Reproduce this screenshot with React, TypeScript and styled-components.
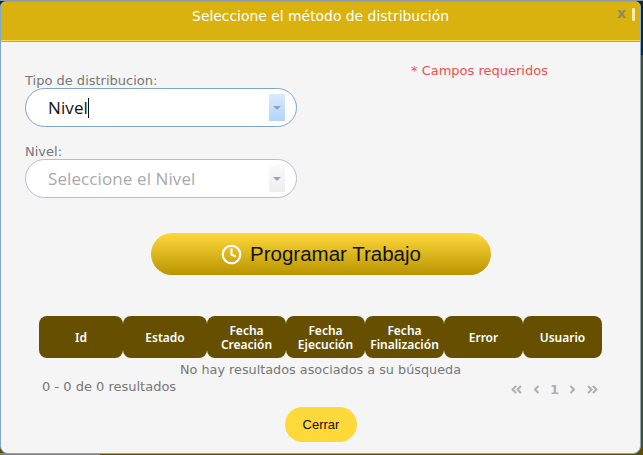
import { createGlobalStyle, styled } from 'styled-components'
import { Clock } from 'lucide-react'
import { FaAngleDoubleLeft, FaAngleDoubleRight, FaAngleLeft, FaAngleRight } from 'react-icons/fa'

const columns = [
  { key: 'id', label: 'Id', width: 84 },
  { key: 'estado', label: 'Estado', width: 84 },
  { key: 'creacion', label: 'Fecha\nCreación', width: 79 },
  { key: 'ejecucion', label: 'Fecha\nEjecución', width: 79 },
  { key: 'finalizacion', label: 'Fecha\nFinalización', width: 79 },
  { key: 'error', label: 'Error', width: 79 },
  { key: 'usuario', label: 'Usuario', width: 79 },
]

export default function App() {
  return (
    <>
      <GlobalStyle />
      <Dialog>
        <Header>
          <Title>Seleccione el método de distribución</Title>
          <CloseMark>x</CloseMark>
          <GripMark />
        </Header>
        <Body>
          <FormRow>
            <Fields>
              <Field>
                <Label>Tipo de distribucion:</Label>
                <SelectBox $active>
                  <SelectValue>
                    Nivel
                    <Caret />
                  </SelectValue>
                  <DropButton $active>
                    <Arrow />
                  </DropButton>
                </SelectBox>
              </Field>
              <Field>
                <Label>Nivel:</Label>
                <SelectBox>
                  <SelectValue $placeholder>Seleccione el Nivel</SelectValue>
                  <DropButton>
                    <Arrow />
                  </DropButton>
                </SelectBox>
              </Field>
            </Fields>
            <Required>* Campos requeridos</Required>
          </FormRow>

          <ScheduleButton type="button">
            <Clock size={21} color="#fff" strokeWidth={2.4} />
            Programar Trabajo
          </ScheduleButton>

          <TableHead>
            {columns.map((col) => (
              <HeadCell key={col.key} $width={col.width}>
                {col.label}
              </HeadCell>
            ))}
          </TableHead>
          <EmptyText>No hay resultados asociados a su búsqueda</EmptyText>
          <FooterRow>
            <Results>0 - 0 de 0 resultados</Results>
            <Pager>
              <FaAngleDoubleLeft size={13} />
              <FaAngleLeft size={13} />
              <PageNumber>1</PageNumber>
              <FaAngleRight size={13} />
              <FaAngleDoubleRight size={13} />
            </Pager>
          </FooterRow>
          <CloseButton type="button">Cerrar</CloseButton>
        </Body>
      </Dialog>
    </>
  )
}

const GlobalStyle = createGlobalStyle`
  html, body {
    margin: 0;
    padding: 0;
    height: 100%;
    overflow: hidden;
  }
  body {
    background:
      linear-gradient(#8a9aa8, #8a9aa8) top / 100% 1px no-repeat,
      linear-gradient(90deg, #808080 100px, transparent 100px) bottom / 100% 2px no-repeat,
      linear-gradient(#222 55px, #5e4d00 55px);
  }
`

const Dialog = styled.div`
  width: 641px;
  height: 453px;
  margin-top: 1px;
  box-sizing: border-box;
  border: 1px solid #7fa8cc;
  border-radius: 6px 6px 8px 8px;
  background: #f5f5f5;
  font-family: "DejaVu Sans", Verdana, sans-serif;
  overflow: hidden;
`

const Header = styled.div`
  position: relative;
  height: 39px;
  box-sizing: border-box;
  background: #d9b20f;
  border-bottom: 1px solid #f6dc4a;
  box-shadow: 0 1px 0 #8faabf;
  display: flex;
  justify-content: center;
  padding-top: 6px;
`

const Title = styled.div`
  color: #fff;
  font-size: 13.9px;
  line-height: 16px;
`

const CloseMark = styled.span`
  position: absolute;
  top: 3px;
  right: 14px;
  font-size: 14px;
  line-height: 16px;
  font-weight: bold;
  color: #8f8a5a;
`

const GripMark = styled.span`
  position: absolute;
  top: 6px;
  right: 5px;
  width: 3px;
  height: 13px;
  border-radius: 1px;
  background: #fbeeb0;
`

const Body = styled.div`
  display: flex;
  flex-direction: column;
`

const FormRow = styled.div`
  display: flex;
  align-items: flex-start;
  padding: 32px 0 0 24px;
`

const Fields = styled.div`
  display: flex;
  flex-direction: column;
  gap: 17px;
  width: 272px;
`

const Field = styled.div`
  display: flex;
  flex-direction: column;
`

const Label = styled.label`
  font-size: 13px;
  line-height: 15px;
  color: #777;
`

const SelectBox = styled.div<{ $active?: boolean }>`
  height: 39px;
  box-sizing: border-box;
  border: 1px solid ${(p) => (p.$active ? '#7fa6c9' : '#b9bccb')};
  border-radius: 20px;
  background: #fff;
  display: flex;
  align-items: center;
  justify-content: space-between;
  padding: 0 11px 0 22px;
`

const SelectValue = styled.div<{ $placeholder?: boolean }>`
  display: flex;
  align-items: center;
  font-family: "Open Sans", "DejaVu Sans", sans-serif;
  font-size: 17px;
  letter-spacing: 0.1px;
  color: ${(p) => (p.$placeholder ? '#aaa' : '#111')};
`

const Caret = styled.span`
  width: 1px;
  height: 20px;
  background: #111;
`

const DropButton = styled.div<{ $active?: boolean }>`
  width: 16px;
  height: 27px;
  display: flex;
  align-items: center;
  justify-content: center;
  background: ${(p) =>
    p.$active
      ? 'linear-gradient(#d9eafc, #b2d6fd)'
      : 'linear-gradient(#fafafa, #eeeeee)'};
`

const Arrow = styled.span`
  width: 0;
  height: 0;
  border-left: 4px solid transparent;
  border-right: 4px solid transparent;
  border-top: 4px solid #8fa3c4;
`

const Required = styled.div`
  margin: -10px 0 0 114px;
  font-size: 13px;
  line-height: 16px;
  color: #ec5050;
`

const ScheduleButton = styled.button`
  align-self: flex-start;
  margin: 35px 0 0 150px;
  width: 340px;
  height: 42px;
  border: 0;
  border-radius: 21px;
  background: linear-gradient(#ffd93b, #b89400);
  display: flex;
  align-items: center;
  justify-content: center;
  gap: 8px;
  color: #111;
  font-family: "Liberation Sans", Arial, sans-serif;
  font-size: 20.5px;
`

const TableHead = styled.div`
  display: flex;
  margin: 41px 0 0 38px;
`

const HeadCell = styled.div<{ $width: number }>`
  width: ${(p) => p.$width}px;
  height: 42px;
  box-sizing: border-box;
  padding-top: 2px;
  border-radius: 8px;
  background: #665000;
  color: #fff;
  display: flex;
  align-items: center;
  justify-content: center;
  text-align: center;
  white-space: pre-line;
  font-family: "Noto Sans", "DejaVu Sans", sans-serif;
  font-size: 12px;
  font-weight: 600;
  line-height: 14px;
`

const EmptyText = styled.div`
  margin-top: 4px;
  text-align: center;
  font-size: 12.8px;
  line-height: 16px;
  color: #777;
`

const FooterRow = styled.div`
  display: flex;
  justify-content: space-between;
  align-items: flex-start;
  padding: 1px 41px 0 41px;
`

const Results = styled.div`
  font-size: 13px;
  line-height: 16px;
  color: #777;
`

const Pager = styled.div`
  display: flex;
  align-items: center;
  gap: 7px;
  color: #b0b0b0;
  padding-top: 3px;
`

const PageNumber = styled.span`
  font-size: 13px;
  font-weight: bold;
`

const CloseButton = styled.button`
  align-self: flex-start;
  margin: 10px 0 0 284px;
  width: 72px;
  height: 35px;
  border: 0;
  border-radius: 18px;
  background: #ffd83a;
  color: #111;
  font-family: "Liberation Sans", Arial, sans-serif;
  font-size: 13px;
`
